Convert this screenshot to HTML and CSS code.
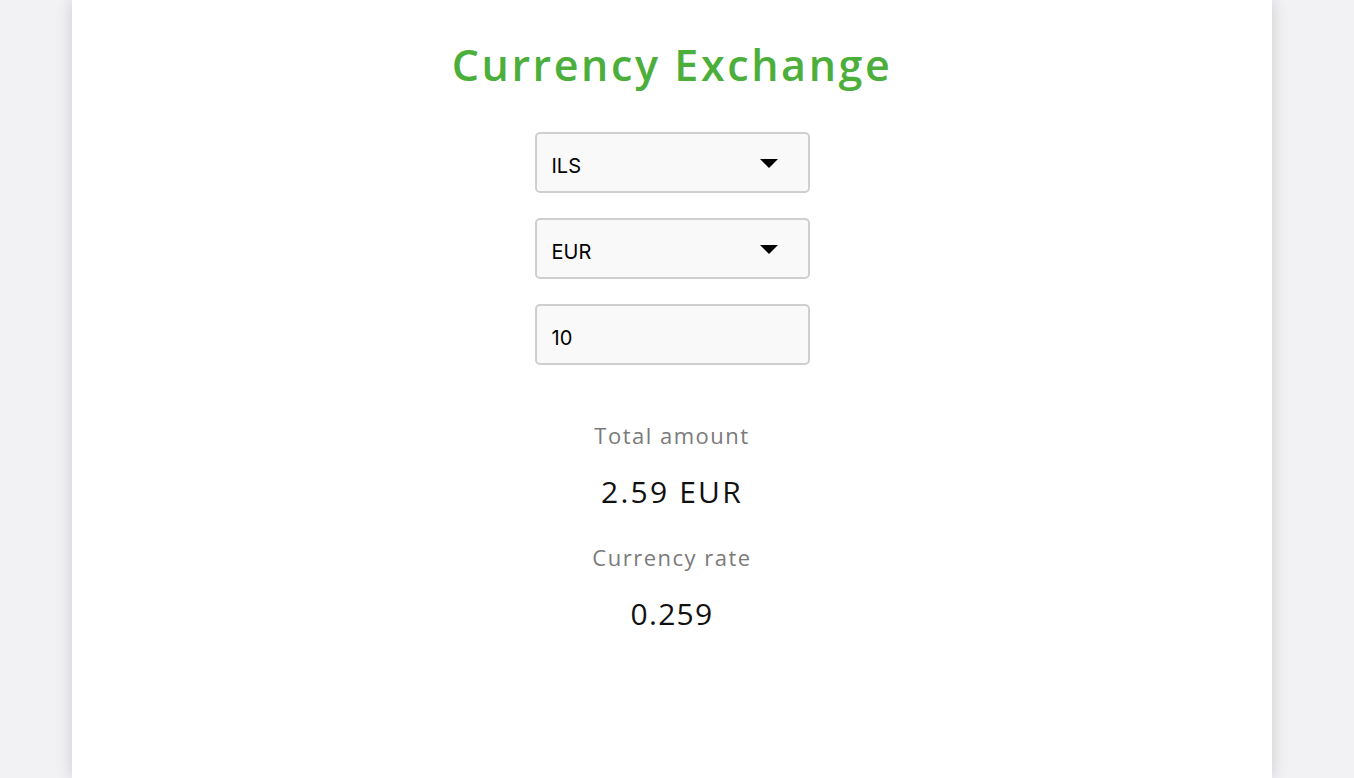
FILE: index.html
```html
<!DOCTYPE html>
<html lang="en">
<head>
<meta charset="utf-8">
<title>Currency Exchange</title>
<link rel="stylesheet" href="styles.css">
</head>
<body>
<main class="card">
  <h1 class="title">Currency Exchange</h1>
  <form class="form">
    <div class="field select">
      <span class="value">ILS</span>
      <svg class="caret" width="18" height="9" viewBox="0 0 18 9"><path d="M0 0H18L9 9Z" fill="#000"/></svg>
    </div>
    <div class="field select">
      <span class="value">EUR</span>
      <svg class="caret" width="18" height="9" viewBox="0 0 18 9"><path d="M0 0H18L9 9Z" fill="#000"/></svg>
    </div>
    <div class="field">
      <span class="value">10</span>
    </div>
  </form>
  <section class="results">
    <div class="label">Total amount</div>
    <div class="amount">2.59 EUR</div>
    <div class="label">Currency rate</div>
    <div class="amount rate">0.259</div>
  </section>
</main>
</body>
</html>
```

FILE: styles.css
```css
html, body {
  margin: 0;
  padding: 0;
  height: 100%;
}
body {
  background: #f2f2f4;
  font-family: "Open Sans", "Noto Sans", sans-serif;
  padding-right: 10px;
  box-sizing: border-box;
}
.card {
  width: 1200px;
  min-height: 100vh;
  margin: 0 auto;
  background: #fff;
  box-shadow: 0 0 16px rgba(0, 0, 0, 0.16);
  display: flex;
  flex-direction: column;
  align-items: center;
  box-sizing: border-box;
  padding-top: 36px;
}
.title {
  margin: 0;
  color: #4caf3c;
  font-size: 43px;
  font-weight: 600;
  line-height: 58px;
  letter-spacing: 2.6px;
}
.form {
  margin-top: 38px;
  display: flex;
  flex-direction: column;
  gap: 25px;
}
.field {
  width: 275px;
  height: 61px;
  box-sizing: border-box;
  border: 2px solid #cfcfcf;
  border-radius: 5px;
  background: #f9f9f9;
  display: flex;
  align-items: center;
  justify-content: space-between;
  padding: 7px 30px 0 15px;
  font-family: "Inter", "Roboto", sans-serif;
  font-size: 20px;
  color: #000;
}
.caret {
  display: block;
  margin-top: -6px;
}
.results {
  margin-top: 50px;
  display: flex;
  flex-direction: column;
  align-items: center;
}
.label {
  color: #7a7a7a;
  font-size: 22px;
  font-weight: 400;
  line-height: 40px;
  letter-spacing: 1.5px;
}
.amount {
  color: #111;
  font-size: 30px;
  font-weight: 400;
  line-height: 40px;
  letter-spacing: 2.2px;
  margin-top: 17px;
  margin-bottom: 25px;
}
.amount.rate {
  letter-spacing: 1.3px;
}
```
